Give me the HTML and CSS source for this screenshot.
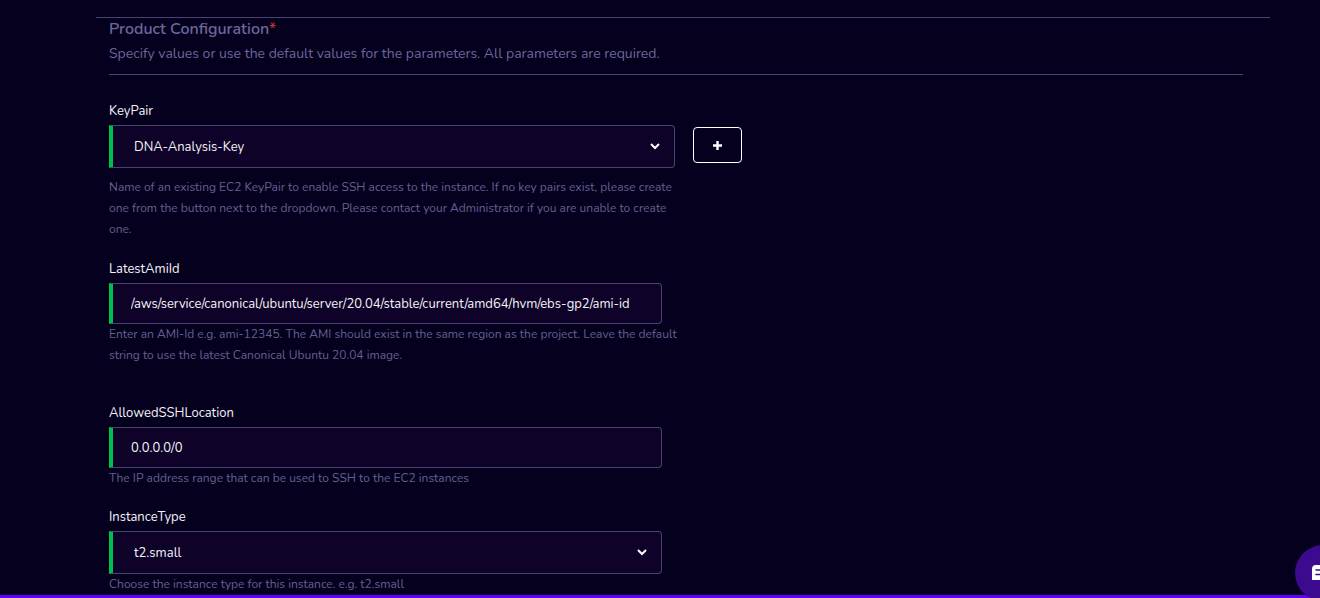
FILE: index.html
```html
<!DOCTYPE html>
<html lang="en">
<head>
<meta charset="utf-8">
<meta name="viewport" content="width=device-width, initial-scale=1">
<title>Product Configuration</title>
<link rel="stylesheet" href="styles.css">
</head>
<body>
<main class="page">
  <form class="panel">
    <header class="panel-header">
      <h1 class="title">Product Configuration<span class="required">*</span></h1>
      <p class="subtitle">Specify values or use the default values for the parameters. All parameters are required.</p>
    </header>

    <div class="field field-keypair">
      <label class="label" for="keypair">KeyPair</label>
      <div class="control-row">
        <div class="select-wrap">
          <select class="control select" id="keypair"><option>DNA-Analysis-Key</option></select>
          <svg class="chevron" viewBox="0 0 12 8" aria-hidden="true"><path d="M2 2l4 4 4-4"/></svg>
        </div>
        <button class="add" type="button" aria-label="Create key pair"><svg class="plus" viewBox="0 0 9 9" aria-hidden="true"><path d="M4.5 0v9M0 4.5h9"/></svg></button>
      </div>
      <p class="help">Name of an existing EC2 KeyPair to enable SSH access to the instance. If no key pairs exist, please create<br>one from the button next to the dropdown. Please contact your Administrator if you are unable to create<br>one.</p>
    </div>

    <div class="field field-ami">
      <label class="label" for="ami">LatestAmiId</label>
      <input class="control input" id="ami" type="text" value="/aws/service/canonical/ubuntu/server/20.04/stable/current/amd64/hvm/ebs-gp2/ami-id">
      <p class="help">Enter an AMI-Id e.g. ami-12345. The AMI should exist in the same region as the project. Leave the default<br>string to use the latest Canonical Ubuntu 20.04 image.</p>
    </div>

    <div class="field field-ssh">
      <label class="label" for="ssh">AllowedSSHLocation</label>
      <input class="control input" id="ssh" type="text" value="0.0.0.0/0">
      <p class="help">The IP address range that can be used to SSH to the EC2 instances</p>
    </div>

    <div class="field">
      <label class="label" for="instance">InstanceType</label>
      <div class="select-wrap">
        <select class="control select" id="instance"><option>t2.small</option></select>
        <svg class="chevron" viewBox="0 0 12 8" aria-hidden="true"><path d="M2 2l4 4 4-4"/></svg>
      </div>
      <p class="help">Choose the instance type for this instance. e.g. t2.small</p>
    </div>
  </form>
</main>
<div class="bottom-bar"></div>
<button class="chat" type="button" aria-label="Open chat">
  <svg class="chat-icon" viewBox="0 0 22 18" aria-hidden="true"><path fill="#fff" d="M4 1h14a4 4 0 0 1 4 4v11H0V5a4 4 0 0 1 4-4z"/><path fill="none" stroke="#3b0a8e" stroke-width="1.6" stroke-linecap="round" d="M4 6h14M4 10.5h14"/></svg>
</button>
</body>
</html>
```
FILE: styles.css
```css
* { box-sizing: border-box; }

body {
  margin: 0;
  height: 100vh;
  overflow: hidden;
  background: #05001e;
  color: #f4f3f8;
  font-family: Nunito, "Noto Sans", sans-serif;
  font-size: 13px;
}

.page { padding: 17px 50px 0 96px; }

.panel {
  border-top: 1px solid #48436f;
  padding: 0 27px 0 13px;
}

.panel-header {
  border-bottom: 1px solid #48436f;
  padding-bottom: 7px;
  margin-bottom: 26px;
  color: #6b6899;
}

.title {
  margin: 0;
  font-size: 16px;
  font-weight: 600;
  line-height: 22px;
}

.required { color: #b3362f; }

.subtitle {
  margin: 0;
  font-size: 14px;
  line-height: 27px;
}

.field { width: calc(50% - 14px); }
.field-keypair { width: auto; margin-bottom: 19px; }
.field-ami { margin-bottom: 37px; }
.field-ssh { margin-bottom: 18px; }

.label {
  display: block;
  margin-bottom: 4px;
  line-height: 20px;
}

.control-row {
  display: flex;
  align-items: center;
  gap: 18px;
  margin-bottom: 9px;
}

.control-row .select-wrap { width: calc(50% - 1px); }
.select-wrap { position: relative; }

.control {
  display: block;
  width: 100%;
  border: 1px solid #48436f;
  border-left: 4px solid #00bf4d;
  border-radius: 0 4px 4px 0;
  background: #0e0228;
  color: #f4f3f8;
  font: inherit;
}

.select { height: 43px; padding: 0 40px 0 21px; appearance: none; }
.input { height: 41px; padding: 0 18px; }

.chevron {
  position: absolute;
  top: 17px;
  right: 14px;
  width: 12px;
  height: 8px;
  fill: none;
  stroke: #fff;
  stroke-width: 2;
  pointer-events: none;
}

.add {
  display: grid;
  place-items: center;
  width: 49px;
  height: 36px;
  padding: 0;
  margin-bottom: 3px;
  border: 1px solid #fff;
  border-radius: 4px;
  background: transparent;
}

.plus { width: 9px; height: 9px; stroke: #fff; stroke-width: 2.4; }

.help {
  margin: 0;
  color: #64608e;
  font-size: 12px;
  line-height: 21px;
  white-space: nowrap;
}

.bottom-bar {
  position: fixed;
  inset: auto 0 0;
  height: 3px;
  background: #6200ff;
}

.chat {
  position: fixed;
  right: -31px;
  bottom: -3px;
  width: 56px;
  height: 56px;
  padding: 0;
  display: grid;
  place-items: center;
  border: 0;
  border-radius: 50%;
  background: #3b0a8e;
}

.chat-icon { width: 22px; height: 18px; }
```
